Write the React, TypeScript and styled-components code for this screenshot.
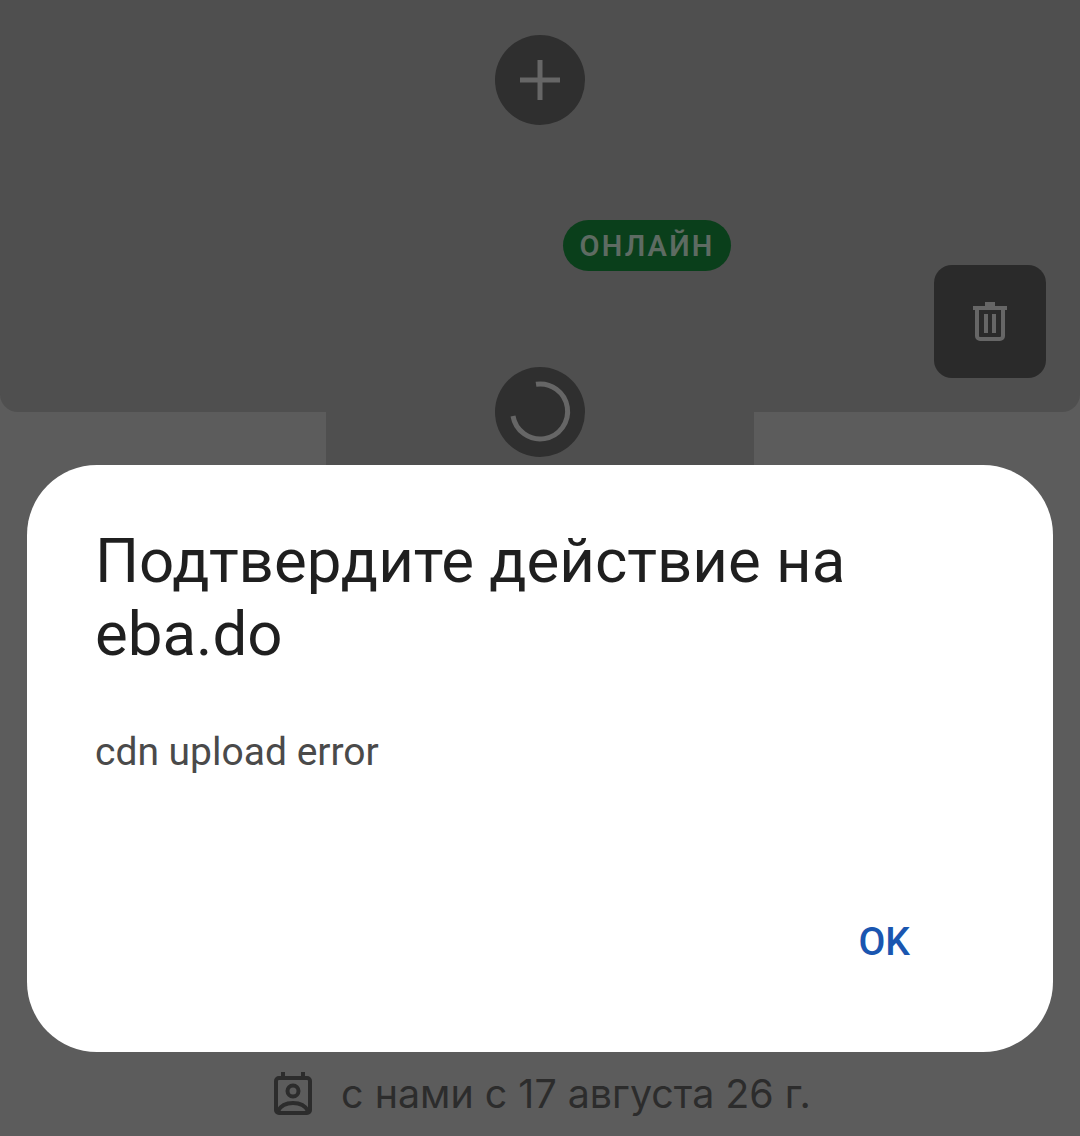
import React from 'react';
import styled, { createGlobalStyle } from 'styled-components';

const GlobalStyle = createGlobalStyle`
  html, body {
    margin: 0;
    padding: 0;
    background: #5c5c5c;
  }
`;

const Page = styled.div`
  position: relative;
  width: 1080px;
  height: 1136px;
  display: flex;
  flex-direction: column;
  align-items: center;
  overflow: hidden;
  background: #5c5c5c;
  font-family: Roboto, "Liberation Sans", sans-serif;
`;

const Header = styled.header`
  position: relative;
  flex: 0 0 412px;
  box-sizing: border-box;
  width: 100%;
  padding-top: 35px;
  display: flex;
  justify-content: center;
  align-items: flex-start;
  border-radius: 0 0 18px 18px;
  background: #4f4f4f;
`;

const RoundButton = styled.div`
  flex: 0 0 auto;
  width: 90px;
  height: 90px;
  display: flex;
  justify-content: center;
  align-items: center;
  border-radius: 50%;
  background: #2f2f2f;
`;

const SpinnerButton = styled(RoundButton)`
  position: absolute;
  left: 495px;
  bottom: -45px;
  z-index: 1;
`;

const OnlineBadge = styled.div`
  position: absolute;
  left: 563px;
  top: 220px;
  width: 168px;
  height: 51px;
  display: flex;
  justify-content: center;
  align-items: center;
  border-radius: 26px;
  background: #0a3f1b;
  color: #5e6b62;
  font-size: 29px;
  font-weight: 600;
  letter-spacing: 2.2px;
`;

const TrashButton = styled.div`
  position: absolute;
  left: 934px;
  top: 265px;
  width: 112px;
  height: 113px;
  display: flex;
  justify-content: center;
  align-items: center;
  border-radius: 18px;
  background: #2a2a2a;
`;

const AvatarStrip = styled.div`
  flex: 0 0 200px;
  width: 428px;
  background: #4f4f4f;
`;

const MemberSince = styled.div`
  margin-top: auto;
  height: 84px;
  padding-left: 5px;
  display: flex;
  justify-content: center;
  align-items: center;
  gap: 29px;
  color: #2c2c2c;
  font-family: Inter, Roboto, sans-serif;
  font-size: 39.4px;
`;

const Dialog = styled.div`
  position: absolute;
  z-index: 2;
  left: 27px;
  top: 465px;
  box-sizing: border-box;
  width: 1026px;
  height: 587px;
  padding: 60px 68px 0;
  display: flex;
  flex-direction: column;
  border-radius: 70px;
  background: #ffffff;
`;

const Title = styled.h2`
  margin: 0;
  color: #1f1f1f;
  font-size: 61.8px;
  font-weight: 400;
  line-height: 73px;
`;

const Message = styled.p`
  margin: 56px 0 0;
  color: #4a4a4a;
  font-size: 39px;
  font-weight: 400;
  line-height: 50px;
`;

const Actions = styled.div`
  margin-top: auto;
  padding: 0 75px 86px 0;
  display: flex;
  justify-content: flex-end;
`;

const OkButton = styled.span`
  color: #1a56b0;
  font-size: 39px;
  font-weight: 500;
  line-height: 48px;
`;

const PlusIcon = () => (
  <svg width="40" height="40" viewBox="0 0 40 40" fill="none" stroke="#666666" strokeWidth="5">
    <path d="M20 0v40M0 20h40" />
  </svg>
);

const SpinnerIcon = () => (
  <svg width="90" height="90" viewBox="0 0 90 90" fill="none" stroke="#666666" strokeWidth="5">
    <path d="M41 17.3A27.5 27.5 0 1 1 18 49" />
  </svg>
);

const TrashIcon = () => (
  <svg width="36" height="40" viewBox="0 0 36 40" fill="none" stroke="#666666" strokeWidth="4">
    <path d="M1 6h34M13 2h10" />
    <path d="M5 6v28a3 3 0 0 0 3 3h20a3 3 0 0 0 3-3V6" />
    <path d="M14 12v19M22 12v19" />
  </svg>
);

const CalendarPersonIcon = () => (
  <svg width="38" height="44" viewBox="0 0 38 44" fill="none" stroke="#2c2c2c" strokeWidth="4">
    <rect x="2" y="6" width="34" height="35" rx="3" />
    <path d="M9 0v7M29 0v7" />
    <circle cx="19" cy="19" r="5.5" />
    <path d="M4 39c3-6 9-8 15-8s12 2 15 8" />
  </svg>
);

const App = (): JSX.Element => (
  <>
    <GlobalStyle />
    <Page>
      <Header>
        <RoundButton>
          <PlusIcon />
        </RoundButton>
        <OnlineBadge>ОНЛАЙН</OnlineBadge>
        <TrashButton>
          <TrashIcon />
        </TrashButton>
        <SpinnerButton>
          <SpinnerIcon />
        </SpinnerButton>
      </Header>
      <AvatarStrip />
      <MemberSince>
        <CalendarPersonIcon />
        <span>с нами с 17 августа 26 г.</span>
      </MemberSince>
      <Dialog>
        <Title>Подтвердите действие на eba.do</Title>
        <Message>cdn upload error</Message>
        <Actions>
          <OkButton>OK</OkButton>
        </Actions>
      </Dialog>
    </Page>
  </>
);

export default App;
